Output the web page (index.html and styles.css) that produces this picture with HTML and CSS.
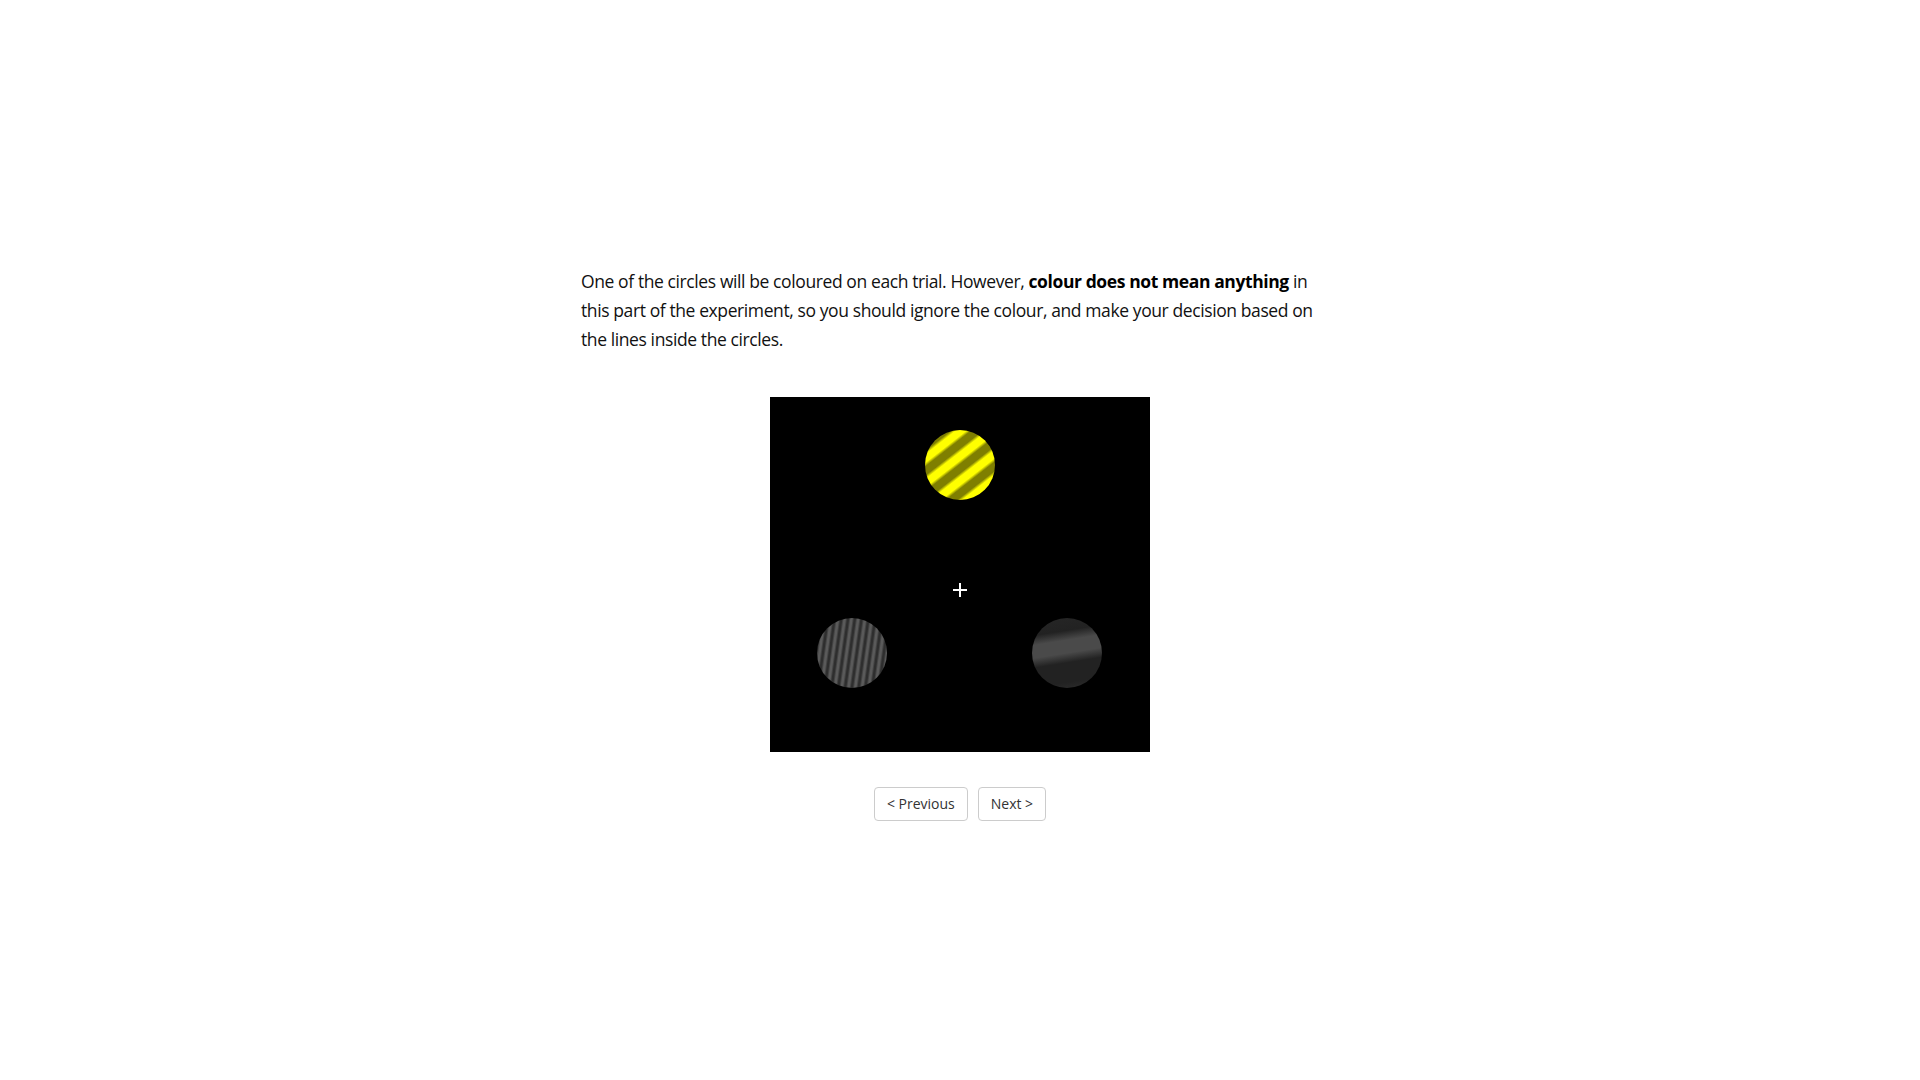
FILE: index.html
```html
<!DOCTYPE html>
<html lang="en">
<head>
<meta charset="utf-8">
<title>Instructions</title>
<link rel="stylesheet" href="styles.css">
</head>
<body>
<div class="display">
  <div class="content">
    <div class="instructions">
      <p>One of the circles will be coloured on each trial. However, <b>colour does not mean anything</b> in this part of the experiment, so you should ignore the colour, and make your decision based on the lines inside the circles.</p>
    </div>
    <div class="stimulus">
      <div class="grating grating-top"></div>
      <div class="fixation"></div>
      <div class="grating grating-left"></div>
      <div class="grating grating-right"></div>
    </div>
    <div class="nav">
      <button class="btn btn-back">&lt; Previous</button><button class="btn btn-next">Next &gt;</button>
    </div>
  </div>
</div>
</body>
</html>
```

FILE: styles.css
```css
html, body {
  margin: 0;
  padding: 0;
  background: #ffffff;
}

.display {
  min-height: 100vh;
  box-sizing: border-box;
  padding-top: 8px;
  display: flex;
  align-items: center;
  justify-content: center;
  font-family: "Open Sans", "Liberation Sans", Arial, sans-serif;
  font-size: 18px;
  line-height: 28.8px;
  color: #111;
}

.content {
  display: flex;
  flex-direction: column;
  align-items: center;
}

.instructions {
  width: 738px;
  padding-right: 20px;
  text-align: left;
}

.instructions p {
  margin: 0;
  font-size: 17.5px;
  letter-spacing: -0.4px;
}

.instructions b {
  font-weight: 700;
  color: #000;
}

.stimulus {
  position: relative;
  width: 380px;
  height: 355px;
  background: #000;
  margin-top: 44px;
}

.grating {
  position: absolute;
  width: 70px;
  height: 70px;
  border-radius: 50%;
}

.grating-top {
  left: 155px;
  top: 33px;
  background: repeating-linear-gradient(142deg,
    #ffff00 0px, #ffff00 6.5px,
    #7f7f00 9.5px, #7f7f00 16.5px,
    #ffff00 19.5px);
}

.grating-left {
  left: 47px;
  top: 221px;
  background: repeating-linear-gradient(98deg,
    #5a5a5a 0px, #5a5a5a 1.4px,
    #2e2e2e 3.4px, #2e2e2e 4.7px,
    #5a5a5a 6.7px);
}

.grating-right {
  left: 262px;
  top: 221px;
  background: linear-gradient(171deg,
    #262626 0%, #222222 22%,
    #4a4a4a 34%, #4a4a4a 50%,
    #222222 62%, #222222 86%,
    #2e2e2e 100%);
}

.fixation {
  position: absolute;
  left: 183px;
  top: 186px;
  width: 14px;
  height: 14px;
}

.fixation::before,
.fixation::after {
  content: "";
  position: absolute;
  background: #ffffff;
}

.fixation::before {
  left: 0;
  top: 6px;
  width: 14px;
  height: 2px;
}

.fixation::after {
  left: 6px;
  top: 0;
  width: 2px;
  height: 14px;
}

.nav {
  margin-top: 35px;
  display: flex;
}

.btn {
  font-family: "Open Sans", "Liberation Sans", Arial, sans-serif;
  font-size: 14px;
  line-height: 1.4;
  color: #333;
  background: #fff;
  border: 1px solid #ccc;
  border-radius: 4px;
  padding: 6px 12px;
  margin: 0;
  cursor: pointer;
}

.btn-back {
  margin-right: 5px;
}

.btn-next {
  margin-left: 5px;
}
```
